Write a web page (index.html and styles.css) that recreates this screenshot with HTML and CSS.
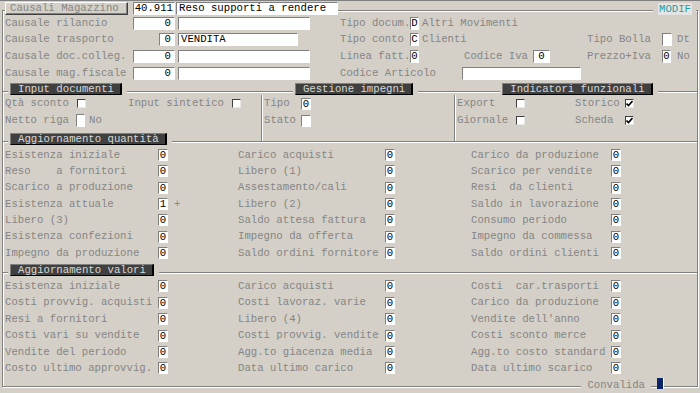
FILE: index.html
```html
<!DOCTYPE html>
<html lang="it">

<head>
    <meta charset="UTF-8">
    <title>Causali Magazzino</title>
    <link rel="stylesheet" href="styles.css">
</head>

<body>
    <div class="frame">
        <!-- testata -->
        <div class="head">
            <div class="head-left">
                <span class="btn">Causali Magazzino</span><span class="box code">40.911</span><span class="box name">Reso supporti a rendere</span>
            </div>
            <div class="tag"><span class="modif">MODIF</span></div>
        </div>

        <!-- causali collegate -->
        <div class="top">
            <span class="c1">Causale rilancio</span><span class="box num">0</span><span class="box desc"></span>
            <span>Tipo docum.</span><span class="box one">D</span><span class="txt">Altri Movimenti</span>

            <span class="c1">Causale trasporto</span><span class="box num short">0</span><span class="box desc mid">VENDITA</span>
            <span>Tipo conto</span><span class="box one">C</span><span class="txt">Clienti</span>
            <span class="c10">Tipo Bolla</span><span class="box one wide"></span><span class="after">Dt</span>

            <span class="c1">Causale doc.colleg.</span><span class="box num">0</span><span class="box desc"></span>
            <span>Linea fatt.</span><span class="box one">0</span>
            <span class="c7">Codice Iva</span><span class="box iva">0</span>
            <span class="c10">Prezzo+Iva</span><span class="box one">0</span><span class="after">No</span>

            <span class="c1">Causale mag.fiscale</span><span class="box num">0</span><span class="box desc"></span>
            <span class="span3">Codice Articolo</span><span class="box art"></span>
        </div>

        <!-- input / impegni / indicatori -->
        <div class="shead">
            <span class="rule lead"></span><span class="title">Input documenti</span><span class="rule r2"></span><span class="title">Gestione impegni</span><span class="rule r3"></span><span class="title">Indicatori funzionali</span><span class="rule fill"></span>
        </div>
        <div class="sec2">
            <div class="g1">
                <span>Qtà sconto</span><span class="cb"></span><span>Input sintetico</span><span class="cb"></span>
                <span>Netto riga</span>
                <div class="pair"><span class="box sq"></span><span class="txt">No</span></div>
            </div>
            <div class="g2">
                <span>Tipo</span><span class="box sm">0</span>
                <span>Stato</span><span class="box sm"></span>
            </div>
            <div class="g3">
                <span>Export</span><span class="cb"></span>
                <span>Storico</span><span class="cb"><svg viewBox="0 0 7 7" width="7" height="7"><path d="M0.5 3.5 L2.5 5.5 L6.5 1" fill="none" stroke="#000" stroke-width="1.6"/></svg></span>
                <span>Giornale</span><span class="cb"></span>
                <span>Scheda</span><span class="cb"><svg viewBox="0 0 7 7" width="7" height="7"><path d="M0.5 3.5 L2.5 5.5 L6.5 1" fill="none" stroke="#000" stroke-width="1.6"/></svg></span>
            </div>
        </div>

        <!-- quantita -->
        <div class="shead over">
            <span class="rule lead"></span><span class="title">Aggiornamento quantità</span><span class="rule fill"></span>
        </div>
        <div class="data q">
            <div class="dcol k1">
                <div class="fld"><span>Esistenza iniziale</span><span class="box sm">0</span></div>
                <div class="fld"><span>Reso    a fornitori</span><span class="box sm">0</span></div>
                <div class="fld"><span>Scarico a produzione</span><span class="box sm">0</span></div>
                <div class="fld"><span>Esistenza attuale</span><span class="box sm">1</span><span class="sign">+</span></div>
                <div class="fld"><span>Libero (3)</span><span class="box sm">0</span></div>
                <div class="fld"><span>Esistenza confezioni</span><span class="box sm">0</span></div>
                <div class="fld"><span>Impegno da produzione</span><span class="box sm">0</span></div>
            </div>
            <div class="dcol k2">
                <div class="fld"><span>Carico acquisti</span><span class="box sm">0</span></div>
                <div class="fld"><span>Libero (1)</span><span class="box sm">0</span></div>
                <div class="fld"><span>Assestamento/cali</span><span class="box sm">0</span></div>
                <div class="fld"><span>Libero (2)</span><span class="box sm">0</span></div>
                <div class="fld"><span>Saldo attesa fattura</span><span class="box sm">0</span></div>
                <div class="fld"><span>Impegno da offerta</span><span class="box sm">0</span></div>
                <div class="fld"><span>Saldo ordini fornitore</span><span class="box sm">0</span></div>
            </div>
            <div class="dcol k3">
                <div class="fld"><span>Carico da produzione</span><span class="box sm">0</span></div>
                <div class="fld"><span>Scarico per vendite</span><span class="box sm">0</span></div>
                <div class="fld"><span>Resi  da clienti</span><span class="box sm">0</span></div>
                <div class="fld"><span>Saldo in lavorazione</span><span class="box sm">0</span></div>
                <div class="fld"><span>Consumo periodo</span><span class="box sm">0</span></div>
                <div class="fld"><span>Impegno da commessa</span><span class="box sm">0</span></div>
                <div class="fld"><span>Saldo ordini clienti</span><span class="box sm">0</span></div>
            </div>
        </div>

        <!-- valori -->
        <div class="shead">
            <span class="rule lead"></span><span class="title">Aggiornamento valori</span><span class="rule fill"></span>
        </div>
        <div class="data v">
            <div class="dcol k1">
                <div class="fld"><span>Esistenza iniziale</span><span class="box sm">0</span></div>
                <div class="fld"><span>Costi provvig. acquisti</span><span class="box sm">0</span></div>
                <div class="fld"><span>Resi a fornitori</span><span class="box sm">0</span></div>
                <div class="fld"><span>Costi vari su vendite</span><span class="box sm">0</span></div>
                <div class="fld"><span>Vendite del periodo</span><span class="box sm">0</span></div>
                <div class="fld"><span>Costo ultimo approvvig.</span><span class="box sm">0</span></div>
            </div>
            <div class="dcol k2">
                <div class="fld"><span>Carico acquisti</span><span class="box sm">0</span></div>
                <div class="fld"><span>Costi lavoraz. varie</span><span class="box sm">0</span></div>
                <div class="fld"><span>Libero (4)</span><span class="box sm">0</span></div>
                <div class="fld"><span>Costi provvig. vendite</span><span class="box sm">0</span></div>
                <div class="fld"><span>Agg.to giacenza media</span><span class="box sm">0</span></div>
                <div class="fld"><span>Data ultimo carico</span><span class="box sm">0</span></div>
            </div>
            <div class="dcol k3">
                <div class="fld"><span>Costi  car.trasporti</span><span class="box sm">0</span></div>
                <div class="fld"><span>Carico da produzione</span><span class="box sm">0</span></div>
                <div class="fld"><span>Vendite dell'anno</span><span class="box sm">0</span></div>
                <div class="fld"><span>Costi sconto merce</span><span class="box sm">0</span></div>
                <div class="fld"><span>Agg.to costo standard</span><span class="box sm">0</span></div>
                <div class="fld"><span>Data ultimo scarico</span><span class="box sm">0</span></div>
            </div>
        </div>

        <div class="foot"><span class="conv">Convalida</span><span class="ok"></span></div>
    </div>
</body>

</html>
```

FILE: styles.css
```css
* {
    margin: 0;
    padding: 0;
    box-sizing: border-box;
}

body {
    width: 700px;
    height: 393px;
    overflow: hidden;
    background-color: #d4d0c8;
    border-top: 1px solid #808080;
    font-family: "Liberation Mono", "Courier New", monospace;
    font-size: 10.67px;
    line-height: 11px;
    color: #858585;
}

span {
    white-space: pre;
}

/* groove frame round the whole form */
.frame {
    display: flex;
    flex-direction: column;
    height: 377px;
    margin: 9px 2px 0 2px;
    border: 1px solid #808080;
    box-shadow: inset 1px 1px 0 #fff, 1px 1px 0 #fff;
}

.head {
    display: flex;
    height: 13px;
    margin-top: -9px;
}

.head-left {
    display: flex;
    margin-left: 2px;
    background-color: #d4d0c8;
}

.btn {
    width: 123px;
    height: 13px;
    padding-left: 4px;
    border: 1px solid;
    border-color: #fff #404040 #404040 #fff;
    box-shadow: inset -1px -1px 0 #808080;
    line-height: 11px;
}

.box {
    display: block;
    height: 13px;
    background-color: #fff;
    color: #000;
    border: 1px solid;
    border-color: #808080 #fff #fff #808080;
    line-height: 11px;
}

.code {
    width: 42px;
    margin-left: 5px;
    text-align: right;
    padding-right: 1px;
}

.name {
    width: 162px;
    margin-left: 1px;
    padding-left: 2px;
}

.tag {
    margin-left: auto;
    margin-right: 1px;
    padding: 0 4px 0 5px;
    background-color: #d4d0c8;
}

.modif {
    display: block;
    height: 12px;
    margin-top: 1px;
    padding: 0 1px;
    background-color: #e4e4e4;
    color: #25a0a0;
    line-height: 12px;
}

/* top block */
.top {
    display: grid;
    grid-template-columns: 128px 42px 165px 70px 10px 44px 69px 17px 37px 75px 10px 1fr;
    grid-auto-rows: 16.6px;
    align-items: center;
    padding-left: 2px;
}

.c1 {
    grid-column-start: 1;
}

.c7 {
    grid-column-start: 7;
}

.c10 {
    grid-column-start: 10;
}

.span3 {
    grid-column-end: span 3;
}

.num {
    text-align: right;
    padding-right: 3px;
}

.num.short {
    width: 16px;
    justify-self: end;
}

.desc {
    width: 132px;
    margin-left: 3px;
    padding-left: 2px;
}

.desc.mid {
    width: 120px;
}

.one {
    width: 9px;
    text-align: center;
}

.one.wide {
    width: 10px;
}

.iva {
    text-align: center;
}

.art {
    grid-column-end: span 4;
    width: 119px;
    margin-left: -2px;
}

.txt {
    padding-left: 2px;
}

.after {
    padding-left: 5px;
}

/* section headers */
.shead {
    display: flex;
    align-items: flex-end;
    height: 14px;
}

.shead.over {
    margin-top: -10px;
}

.rule {
    height: 2px;
    margin-bottom: 2px;
    border-top: 1px solid #808080;
    background-color: #fff;
}

.lead {
    width: 5px;
}

.r2 {
    width: 166px;
}

.r3 {
    width: 82px;
}

.fill {
    flex: 1;
}

.title {
    height: 12px;
    margin: 0 5px 0 2px;
    padding: 0 6px 0 7px;
    background-color: #404040;
    color: #d8d8d8;
    border-top: 1px solid #808080;
    border-left: 1px solid #808080;
    border-right: 2px solid #000;
    border-bottom: 1px solid #000;
    line-height: 10px;
}

/* input / impegni / indicatori */
.sec2 {
    display: grid;
    grid-template-columns: 258px 193px 1fr;
    height: 46px;
}

.sec2>div {
    display: grid;
    grid-auto-rows: 17px;
    align-items: center;
    align-content: start;
    padding-left: 2px;
}

.sec2>div+div {
    border-left: 1px solid #808080;
    box-shadow: inset 1px 0 0 #fff;
}

.g1 {
    grid-template-columns: 72px 51px 104px auto;
}

.g2 {
    grid-template-columns: 37px auto;
}

.g3 {
    grid-template-columns: 59px 59px 50px auto;
}

.pair {
    display: flex;
    align-items: center;
    grid-column-end: span 3;
    margin-left: -1px;
}

.sq {
    width: 9px;
}

.pair .txt {
    padding-left: 4px;
}

.cb {
    display: flex;
    align-items: center;
    justify-content: center;
    width: 9px;
    height: 9px;
    background-color: #fff;
    border: 1px solid;
    border-color: #404040 #e8e8e8 #e8e8e8 #404040;
}

.sm {
    width: 10px;
    height: 12px;
    line-height: 10px;
    text-align: center;
}

/* quantity / value grids */
.data {
    display: grid;
    grid-template-columns: 233px 233px 1fr;
    padding-left: 2px;
}

.q {
    padding-top: 1.5px;
    padding-bottom: 1px;
}

.v {
    padding-top: 2px;
}

.fld {
    display: flex;
    align-items: center;
}

.q .fld {
    height: 16.35px;
}

.v .fld {
    height: 16.4px;
}

.k1 .fld span:first-child {
    width: 153px;
}

.k2 .fld span:first-child {
    width: 147px;
}

.k3 .fld span:first-child {
    width: 140px;
}

.sign {
    margin-left: 6px;
}

/* bottom line */
.foot {
    display: flex;
    justify-content: flex-end;
    align-items: flex-start;
    height: 11px;
    margin-top: auto;
    margin-bottom: -3px;
}

.conv {
    padding: 2px 6px 0 6px;
    margin-right: 6px;
    height: 11px;
    background-color: #d4d0c8;
}

.ok {
    width: 7px;
    height: 11px;
    margin-right: 33px;
    background-color: #0a246a;
    border-right: 1px solid #fff;
}
```
